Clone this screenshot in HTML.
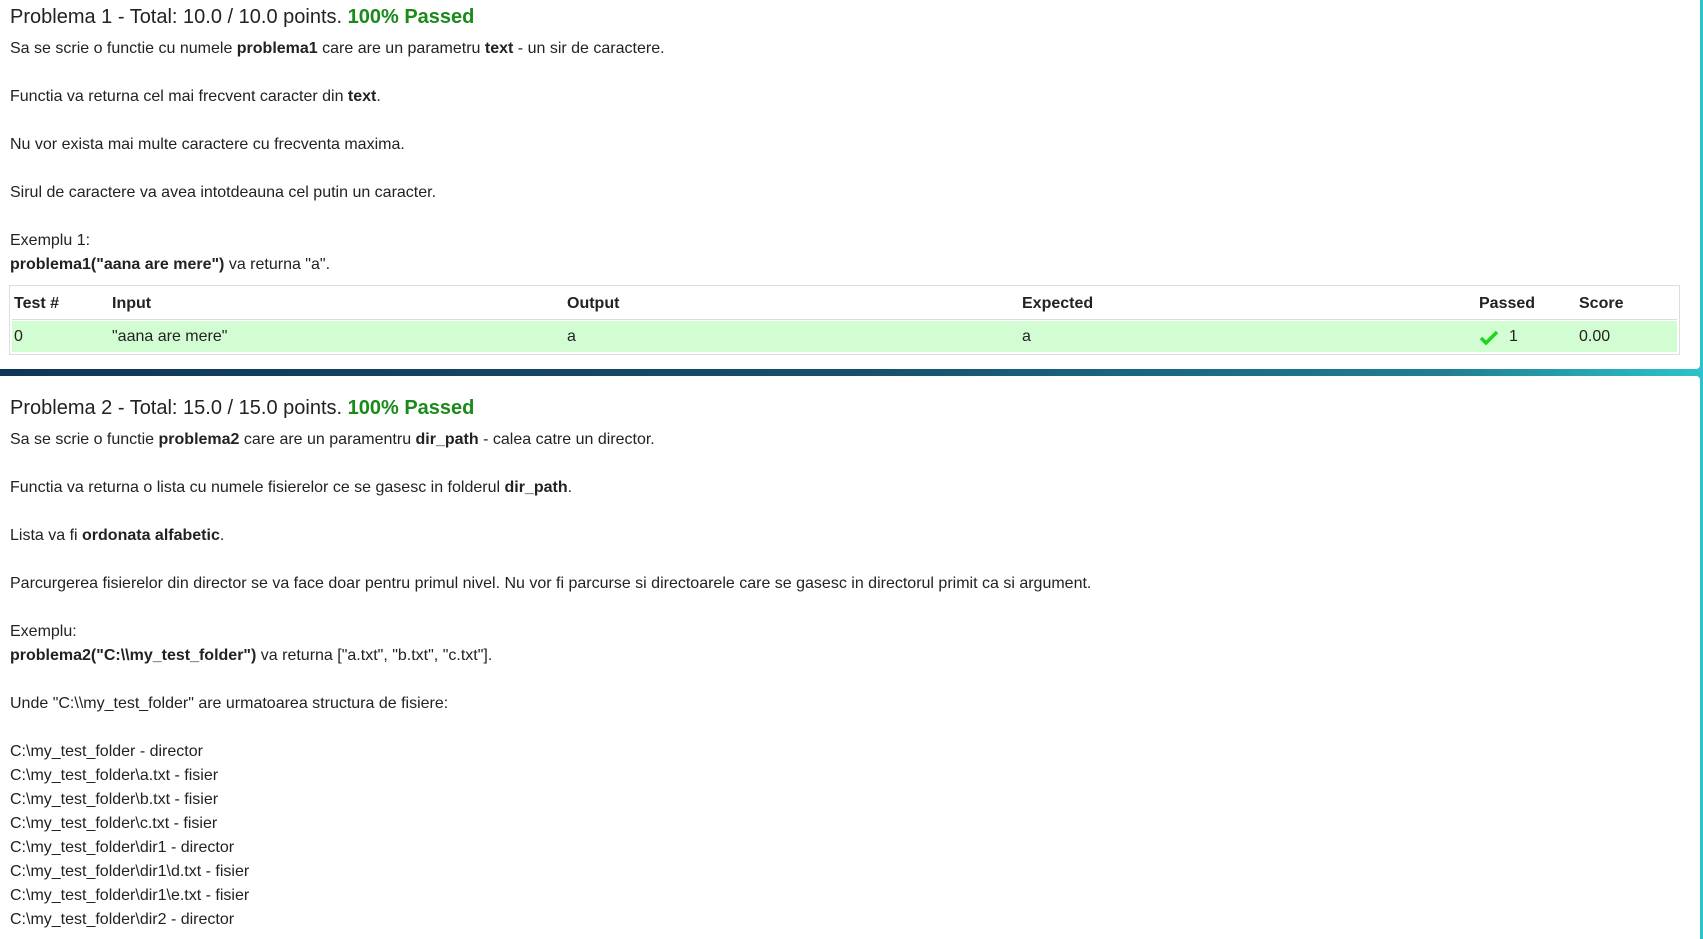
<!DOCTYPE html>
<html><head><meta charset="utf-8"><style>
html,body{margin:0;padding:0;width:1703px;height:939px;overflow:hidden;background:linear-gradient(90deg,#0f3656 0%,#164f6c 50%,#1f7f92 85%,#2cc3cc 100%);font-family:"Liberation Sans",Arial,sans-serif;color:#222;}
.card{position:absolute;left:0;width:1700px;background:#fff;border-radius:0 0 4px 0;}
#c1{top:0;height:369px;}
#c2{top:376px;height:563px;border-radius:0 4px 0 0;}
h3{margin:0;position:absolute;left:10px;font-size:20px;font-weight:normal;color:#222;}
h3 b{color:#1a8a1a;}
.txt{position:absolute;left:10px;font-size:16px;line-height:24px;}
table{position:absolute;left:9px;width:1671px;border:1px solid #ddd;border-collapse:separate;border-spacing:0;padding:1px 2px 2px 2px;font-size:16px;table-layout:fixed;}
th{text-align:left;height:30px;padding:2px 2px 0;font-weight:bold;border-bottom:1px solid #ddd;}
td{background:#d2fdd2;height:30px;padding:1px 2px 0;border-top:1px solid #fff;}
</style></head><body>
<div class="card" id="c1">
<h3 style="top:6px">Problema 1 - Total: 10.0 / 10.0 points. <b>100% Passed</b></h3>
<div class="txt" style="top:37px">Sa se scrie o functie cu numele <b>problema1</b> care are un parametru <b>text</b> - un sir de caractere.<br><br>Functia va returna cel mai frecvent caracter din <b>text</b>.<br><br>Nu vor exista mai multe caractere cu frecventa maxima.<br><br>Sirul de caractere va avea intotdeauna cel putin un caracter.<br><br>Exemplu 1:<br><b>problema1("aana are mere")</b> va returna "a".</div>
<table style="top:285px">
<tr><th style="width:94px">Test #</th><th style="width:451px">Input</th><th style="width:451px">Output</th><th style="width:453px">Expected</th><th style="width:96px">Passed</th><th>Score</th></tr>
<tr><td>0</td><td>"aana are mere"</td><td>a</td><td>a</td><td><svg width="20" height="16" viewBox="0 0 20 16" style="vertical-align:middle;margin-right:10px"><path d="M2 9 L7 14 L18 3" stroke="#1bd61b" stroke-width="3.5" fill="none"/></svg>1</td><td>0.00</td></tr>
</table>
</div>
<div class="card" id="c2">
<h3 style="top:21px">Problema 2 - Total: 15.0 / 15.0 points. <b>100% Passed</b></h3>
<div class="txt" style="top:52px">Sa se scrie o functie <b>problema2</b> care are un paramentru <b>dir_path</b> - calea catre un director.<br><br>Functia va returna o lista cu numele fisierelor ce se gasesc in folderul <b>dir_path</b>.<br><br>Lista va fi <b>ordonata alfabetic</b>.<br><br>Parcurgerea fisierelor din director se va face doar pentru primul nivel. Nu vor fi parcurse si directoarele care se gasesc in directorul primit ca si argument.<br><br>Exemplu:<br><b>problema2("C:\\my_test_folder")</b> va returna ["a.txt", "b.txt", "c.txt"].<br><br>Unde "C:\\my_test_folder" are urmatoarea structura de fisiere:<br><br>C:\my_test_folder - director<br>C:\my_test_folder\a.txt - fisier<br>C:\my_test_folder\b.txt - fisier<br>C:\my_test_folder\c.txt - fisier<br>C:\my_test_folder\dir1 - director<br>C:\my_test_folder\dir1\d.txt - fisier<br>C:\my_test_folder\dir1\e.txt - fisier<br>C:\my_test_folder\dir2 - director</div>
</div>
</body></html>
